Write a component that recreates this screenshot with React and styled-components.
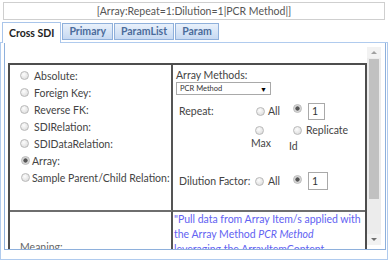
import React from "react";
import styled, { createGlobalStyle, css } from "styled-components";

const GlobalStyle = createGlobalStyle`
  html, body {
    margin: 0;
    padding: 0;
    background: #fff;
  }
  body {
    font-family: Lato, "Open Sans", sans-serif;
    font-size: 10.5px;
    color: #444;
  }
`;

const Page = styled.div`
  width: 388px;
  height: 260px;
  padding-top: 2px;
  box-sizing: border-box;
  overflow: hidden;
  display: flex;
  flex-direction: column;
`;

const Summary = styled.div`
  margin: 0 3px;
  height: 18px;
  box-sizing: border-box;
  border: 1px solid #cfcfcf;
  text-align: center;
  line-height: 16px;
  color: #555;
  white-space: nowrap;
`;

const TabBar = styled.div`
  display: flex;
  align-items: flex-start;
  gap: 1px;
  height: 20px;
  margin-top: 2px;
  padding-left: 2px;
  position: relative;
  z-index: 1;
`;

const Tab = styled.div`
  box-sizing: border-box;
  height: 17px;
  margin-top: 1px;
  padding: 0 6px;
  border: 1px solid #8fb0db;
  background: linear-gradient(#e9f1fb, #c6d9f2);
  color: #4b6c9b;
  font-weight: 700;
  line-height: 15px;
  white-space: nowrap;

  ${props =>
    props.$active &&
    css`
      height: 21px;
      margin-top: 0;
      padding: 0 6px;
      border-color: #a9c5ea;
      border-bottom: none;
      background: #fff;
      color: #222;
      line-height: 20px;
    `};
`;

const Panel = styled.div`
  flex: 1;
  min-height: 0;
  display: flex;
  flex-direction: column;
  border: 1px solid #b0cbee;
  padding: 0 1px 9px 3px;
`;

const ScrollBox = styled.div`
  flex: 1;
  min-height: 0;
  display: flex;
  border: 1px solid #8eb0dc;
  border-top: none;
`;

const Viewport = styled.div`
  flex: 1;
  min-width: 0;
  overflow: hidden;
  padding: 20px 0 0 3px;
`;

const Scrollbar = styled.div`
  width: 14px;
  margin: 4px 4px 4px 0;
  background: #ececec;
  display: flex;
  flex-direction: column;
`;

const ArrowButton = styled.div`
  height: 11px;
  background: #f2f2f2;
  display: flex;
  align-items: center;
  justify-content: center;
  ${props => props.$down && "margin-top: auto;"}

  &::after {
    content: "";
    border-left: 3px solid transparent;
    border-right: 3px solid transparent;
    ${props =>
      props.$down
        ? "border-top: 3px solid #707070;"
        : "border-bottom: 3px solid #a0a0a0;"}
  }
`;

const Thumb = styled.div`
  height: 140px;
  margin: 1px 2px 0;
  background: #c1c1c1;
`;

const Table = styled.div`
  border: 2px solid #4d4d4d;
  display: grid;
  grid-template-columns: 163px 1fr;
`;

const LeftCell = styled.div`
  box-sizing: border-box;
  border-right: 2px solid #555;
  ${props => props.$top && "height: 145px;"}
  ${props => !props.$top && "border-top: 2px solid #6e6e6e;"}
  padding: ${props => (props.$top ? "2px 0 0 10px" : "28px 0 0 10px")};
`;

const RightCell = styled.div`
  ${props => !props.$top && "border-top: 2px solid #6e6e6e;"}
  padding: ${props => (props.$top ? "2px 0 0 3px" : "0 0 0 1px")};
`;

const Option = styled.div`
  display: flex;
  align-items: center;
  height: 17px;
  gap: ${props => (props.$compact ? "2px" : "5px")};
  padding-left: ${props => (props.$compact ? "1px" : "0")};
  white-space: nowrap;
`;

const Radio = styled.input.attrs({ type: "radio", readOnly: true })`
  appearance: none;
  box-sizing: border-box;
  flex: none;
  width: 9px;
  height: 9px;
  margin: 0;
  border-radius: 50%;
  border: 1px solid #b9b9b9;
  background: radial-gradient(circle at 40% 35%, #fdfdfd, #d6d6d6);

  &:checked {
    background: radial-gradient(circle, #555 0 1.8px, #cfcfcf 2.4px, #e6e6e6 4px);
  }
`;

const Heading = styled.div`
  line-height: 16px;
`;

const Dropdown = styled.div`
  box-sizing: border-box;
  width: 95px;
  height: 13px;
  margin-top: -1px;
  border: 1px solid #a9a9a9;
  display: flex;
  align-items: center;
  justify-content: space-between;
  padding: 0 3px;
  font-size: 7.5px;
  color: #333;

  &::after {
    content: "▼";
    font-size: 7px;
    color: #000;
  }
`;

const ParamRow = styled.div`
  display: grid;
  grid-template-columns: 75px 38px 1fr;
  align-items: start;
  margin-top: ${props => props.$gap}px;
`;

const ParamLabel = styled.div`
  padding: 1px 0 0 3px;
  line-height: 16px;
  white-space: nowrap;
`;

const Choices = styled.div`
  display: flex;
  flex-direction: column;
  align-items: flex-start;
`;

const ChoiceLine = styled.div`
  display: flex;
  align-items: center;
  height: ${props => props.$h || 18}px;
  margin-top: ${props => props.$mt || 0}px;
  white-space: nowrap;
`;

const LineRadio = styled(Radio)`
  margin-left: ${props => props.$ml ?? 5}px;
  ${props =>
    props.$mt !== undefined &&
    css`
      align-self: flex-start;
      margin-top: ${props.$mt}px;
    `};
`;

const ChoiceText = styled.span`
  margin-left: ${props => props.$ml ?? 3}px;
`;

const Wrapped = styled.div`
  line-height: 14px;
  margin-top: ${props => props.$mt || 0}px;
`;

const NumberBox = styled.input.attrs({ readOnly: true })`
  box-sizing: border-box;
  width: ${props => props.$w}px;
  height: ${props => props.$h}px;
  margin: 0 0 0 6px;
  padding: 0 0 0 3px;
  border: 1px solid #a9a9a9;
  font: inherit;
  color: #333;
  background: #fff;
`;

const Meaning = styled.div`
  line-height: 15px;
  color: #6262f2;
  padding-right: 4px;
`;

const MeaningLabel = styled.div`
  line-height: 14px;
  color: #666;
`;

const relations = [
  "Absolute:",
  "Foreign Key:",
  "Reverse FK:",
  "SDIRelation:",
  "SDIDataRelation:",
];

export default function App() {
  return (
    <Page>
      <GlobalStyle />
      <Summary>[Array:Repeat=1:Dilution=1|PCR Method|]</Summary>
      <TabBar>
        <Tab $active>Cross SDI</Tab>
        <Tab>Primary</Tab>
        <Tab>ParamList</Tab>
        <Tab>Param</Tab>
      </TabBar>
      <Panel>
        <ScrollBox>
          <Viewport>
            <Table>
              <LeftCell $top>
                {relations.map(label => (
                  <Option key={label}>
                    <Radio name="rel" />
                    <span>{label}</span>
                  </Option>
                ))}
                <Option $compact>
                  <Radio name="rel" checked />
                  <span>Array:</span>
                </Option>
                <Option $compact>
                  <Radio name="rel" />
                  <span>Sample Parent/Child Relation:</span>
                </Option>
              </LeftCell>
              <RightCell $top>
                <Heading>Array Methods:</Heading>
                <Dropdown>PCR Method</Dropdown>
                <ParamRow $gap={7}>
                  <ParamLabel>Repeat:</ParamLabel>
                  <Choices>
                    <ChoiceLine>
                      <LineRadio name="rep" />
                      <ChoiceText>All</ChoiceText>
                    </ChoiceLine>
                    <ChoiceLine $h={9} $mt={6}>
                      <LineRadio name="rep" $ml={4} />
                    </ChoiceLine>
                    <Wrapped $mt={1}>Max</Wrapped>
                  </Choices>
                  <Choices>
                    <ChoiceLine>
                      <LineRadio name="rep" checked $ml={4} $mt={2} />
                      <NumberBox value="1" $w={17} $h={17} />
                    </ChoiceLine>
                    <ChoiceLine $h={14} $mt={3}>
                      <LineRadio name="rep" $ml={4} />
                      <ChoiceText $ml={4}>Replicate</ChoiceText>
                    </ChoiceLine>
                    <Wrapped $mt={2}>Id</Wrapped>
                  </Choices>
                </ParamRow>
                <ParamRow $gap={19}>
                  <ParamLabel>Dilution Factor:</ParamLabel>
                  <Choices>
                    <ChoiceLine>
                      <LineRadio name="dil" $ml={4} />
                      <ChoiceText $ml={4}>All</ChoiceText>
                    </ChoiceLine>
                  </Choices>
                  <Choices>
                    <ChoiceLine>
                      <LineRadio name="dil" checked $ml={4} $mt={3} />
                      <NumberBox value="1" $w={20} $h={18} />
                    </ChoiceLine>
                  </Choices>
                </ParamRow>
              </RightCell>
              <LeftCell>
                <MeaningLabel>Meaning:</MeaningLabel>
              </LeftCell>
              <RightCell>
                <Meaning>
                  "Pull data from Array Item/s applied with the Array Method{" "}
                  <i>PCR Method</i> leveraging the ArrayItemContent relationship to the
                  Array Items of the current SDI."
                </Meaning>
              </RightCell>
            </Table>
          </Viewport>
          <Scrollbar>
            <ArrowButton />
            <Thumb />
            <ArrowButton $down />
          </Scrollbar>
        </ScrollBox>
      </Panel>
    </Page>
  );
}
